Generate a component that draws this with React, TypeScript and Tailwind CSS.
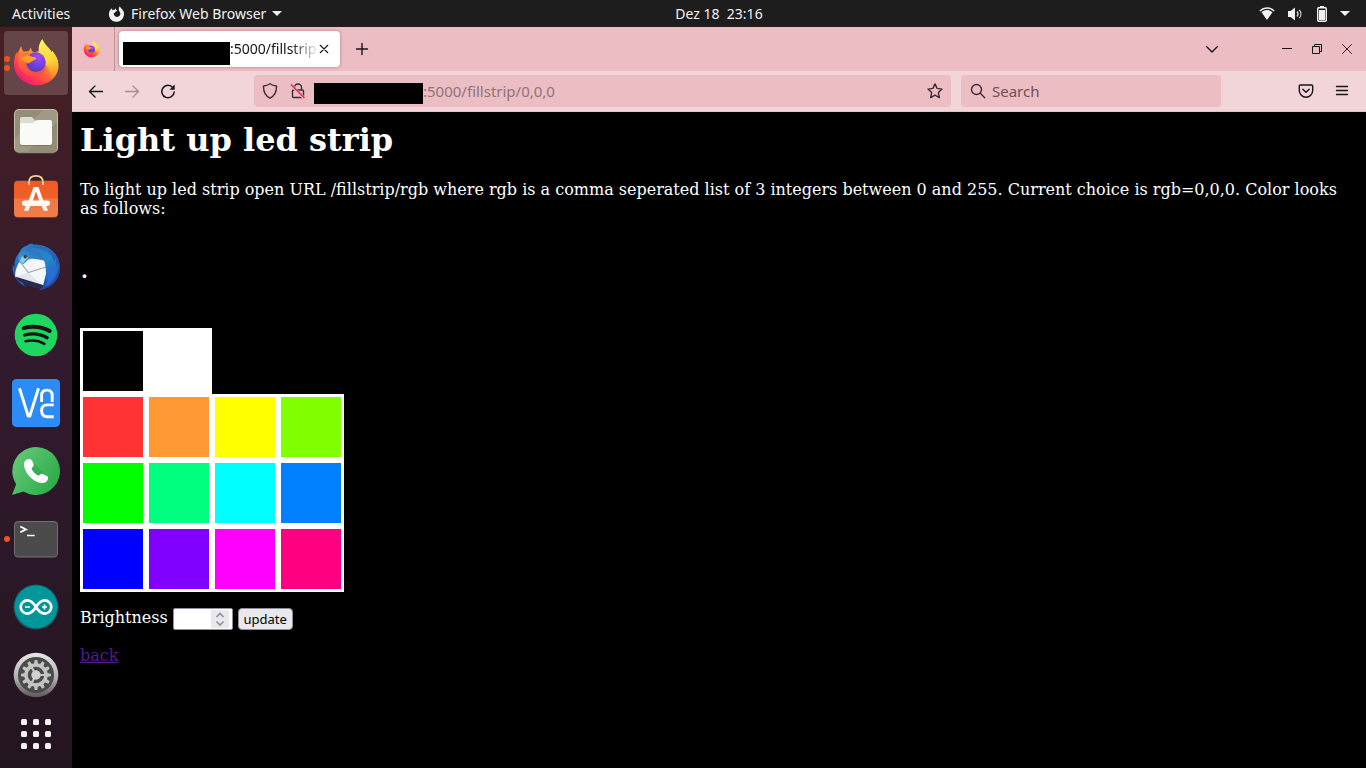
import React from "react";

type IconProps = { className?: string };

function FirefoxLogo({ className }: IconProps) {
  return (
    <svg viewBox="0 0 48 48" className={className} aria-hidden="true">
      <defs>
        <linearGradient id="fx-body" x1="0.85" y1="0.1" x2="0.2" y2="0.95">
          <stop offset="0" stopColor="#fff44f" />
          <stop offset="0.3" stopColor="#ffb031" />
          <stop offset="0.55" stopColor="#ff6b36" />
          <stop offset="0.8" stopColor="#ff3750" />
          <stop offset="1" stopColor="#f0157e" />
        </linearGradient>
        <linearGradient id="fx-tail" x1="0.4" y1="0" x2="0.6" y2="1">
          <stop offset="0" stopColor="#fff155" />
          <stop offset="0.5" stopColor="#ffd83c" />
          <stop offset="1" stopColor="#ff9a2e" stopOpacity="0" />
        </linearGradient>
        <radialGradient id="fx-globe" cx="0.65" cy="0.25" r="0.8">
          <stop offset="0" stopColor="#a749f5" />
          <stop offset="0.5" stopColor="#7542e5" />
          <stop offset="1" stopColor="#4f3bb8" />
        </radialGradient>
        <linearGradient id="fx-head" x1="0" y1="0" x2="0.4" y2="1">
          <stop offset="0" stopColor="#ff9a33" />
          <stop offset="0.5" stopColor="#ff6a3a" />
          <stop offset="1" stopColor="#ff4a48" />
        </linearGradient>
      </defs>
      <path
        d="M9.300 7.200c.2 2.600 1 4 2.500 5.600 1.700-.6 3.600-.7 5.200-.3 .2-1.500.8-2.900 1.900-4 .2 2.700 1.200 4 3.200 5.100l6-2c-1-4.500-.5-8.300 2.300-11.400 1.300 4.200 4.300 6.700 7.200 9.900 1 1.200 1.700 2.300 2.200 3.500l.3-1.800c4.900 5.500 6.900 11 6.200 17.400C44.800 39.300 35.600 46.200 24.500 46.200 12 46.200 2 36.500 2 24.200c0-4.700 1-8.400 3.200-11.600l.6 2.600c.7-3.100 1.700-5.700 3.500-8z"
        fill="url(#fx-body)"
      />
      <path
        d="M30.400.3c1.300 4.200 4.300 6.700 7.200 9.900 1 1.200 1.700 2.300 2.200 3.500l.3-1.800c4.900 5.500 6.900 11 6.200 17.400-.7 5.500-3.500 9.900-7.700 13 .6-7-1.200-13.600-5.600-17.400-.8-4.800-3-6.500-4.800-8.800-2.600-4.700-1.700-11.400 2.200-15.800z"
        fill="url(#fx-tail)"
      />
      <circle cx="23.800" cy="23.200" r="10" fill="url(#fx-globe)" />
      <path
        d="M9.300 7.200c.2 2.600 1 4 2.500 5.600 1.700-.6 3.600-.7 5.200-.3-.4 1.900.3 3.400 1.500 4.700 1.500 1.200 4.200.8 5.500 1.600-.2 1.700-3.800 2.700-4.700 3.600-.6 1.900-3.300 2.100-5 2 .8 5 4.600 8.200 9.500 8.400 5.700.2 9.600-3.200 10.300-7.800.5 7.600-4.700 12.300-11.300 12.300-8.500 0-15-5.500-16.500-12.400-.8-6 .2-12.400 3-17.700z"
        fill="url(#fx-head)"
        opacity="0.8"
      />
      <path
        d="M8.500 19.200c4.200-2 7-3 10.200-1.900 1.700.7 4 .8 5.500 1.600-.3 1.800-3.900 2.700-4.900 3.600-3 2.700-6.800.8-10.800-3.300z"
        fill="#ffa02e"
      />
    </svg>
  );
}

function FilesLogo() {
  return (
    <svg viewBox="0 0 48 48" className="size-12" aria-hidden="true">
      <rect x="2" y="2.500" width="44" height="44" rx="5" fill="#5b5645" />
      <rect x="2" y="2" width="44" height="43.500" rx="5" fill="#c4bfab" />
      <rect x="3" y="3" width="42" height="42" rx="4" fill="#938d78" />
      <path d="M3 31 31 3h10a4 4 0 0 1 4 4v8L15 45H7a4 4 0 0 1-4-4z" fill="#a09a85" />
      <rect x="8" y="14" width="32" height="25" rx="2" fill="#6c6755" opacity="0.6" />
      <path d="M8 12q0-2 2-2h10l3 3.500h3V18H8z" fill="#dedbd0" />
      <path d="M8 18q0-2 2-2h10.500q1.500 0 2.500-1.500t3-1.500h12q2 0 2 2v21q0 2-2 2H10q-2 0-2-2z" fill="#fafaf8" />
    </svg>
  );
}

function SoftwareLogo() {
  return (
    <svg viewBox="0 0 48 48" className="size-12" aria-hidden="true">
      <defs>
        <linearGradient id="sw-bag" x1="0" y1="0" x2="0" y2="1">
          <stop offset="0" stopColor="#f05a24" />
          <stop offset="0.48" stopColor="#ee6129" />
          <stop offset="0.5" stopColor="#f07a45" />
          <stop offset="1" stopColor="#ef7d4b" />
        </linearGradient>
      </defs>
      <rect x="2" y="6.500" width="44" height="36.500" rx="4" fill="#8b3517" />
      <rect x="2" y="5.700" width="44" height="36.300" rx="4" fill="url(#sw-bag)" />
      <path d="M17 10V7.500C17 2.500 20 .9 24 .9s7 1.600 7 6.600V10" fill="none" stroke="#f7d3a3" strokeWidth="1.700" />
      <path d="M21.500 12h5l5 14h-4.200L24 16.500 20.700 26h-4.200z" fill="#fffaf5" />
      <rect x="10" y="25.500" width="28" height="5.400" rx="2.700" fill="#fffaf5" />
      <path d="M13.800 31h4.400l-1.800 4.800H12zM29.800 31h4.400l1.800 4.800h-4.400z" fill="#fffaf5" />
    </svg>
  );
}

function ThunderbirdLogo() {
  return (
    <svg viewBox="0 0 48 48" className="size-12" aria-hidden="true">
      <defs>
        <linearGradient id="tb-body" x1="0.2" y1="0" x2="0.8" y2="1">
          <stop offset="0" stopColor="#2d7fcb" />
          <stop offset="0.5" stopColor="#2262ba" />
          <stop offset="1" stopColor="#1e46a0" />
        </linearGradient>
        <linearGradient id="tb-wing" x1="0.2" y1="0" x2="0.7" y2="1">
          <stop offset="0" stopColor="#2c79c4" />
          <stop offset="0.4" stopColor="#2389c8" />
          <stop offset="1" stopColor="#2353c4" />
        </linearGradient>
        <linearGradient id="tb-head" x1="0" y1="1" x2="1" y2="0">
          <stop offset="0" stopColor="#3fa0e0" />
          <stop offset="1" stopColor="#1f5cab" />
        </linearGradient>
      </defs>
      <path
        d="M15 2.500C17 1 19 .2 21 .5l-.6 1.100C37 1 48 11 48 25c0 9-5 16-13 20l1-2c-2 3-6 4-9 4l3-3c-6 1-12-1-19-4l3 4C5 40-.5 31 .7 21.500L2.500 25C2 17 4.500 12 9 8l-1-.5c2-2.500 4-4 7-5z"
        fill="url(#tb-body)"
      />
      <path d="M8 17.500 17 15l17 2.500V31l-3 11.700L3 34c0-6 2-12 5-16.500z" fill="#f5f6f8" />
      <path d="M3 34 16.300 29.500 31 42.700z" fill="#e4e6eb" />
      <path d="m7.500 18 8.800 11.500L34 24" fill="none" stroke="#a0a9b8" strokeWidth="1.100" />
      <path d="M3 33.500 31 42l-.5 2.500C20 44.500 9 41 3 33.500z" fill="#262a52" />
      <path d="M8 9c6-6 18-9 24-3 4 4 4 9 2.500 13.500-4-3.500-12-5-18-3l-5.500 5-3.500-2C6 16 6 12 8 9z" fill="url(#tb-head)" />
      <path d="M8 18c.5-3 2-5 5-5.500l3 2c-1 2-3.500 3-5.500 6.500z" fill="#8fcdf0" />
      <circle cx="13.200" cy="13.800" r="1.700" fill="#3d3a30" />
      <path d="M22 5c10 0 18 5 20 14l2-4 .5 8 2.500-3-1 8c-2 8-6 13-13 16.500 2-9 1-18 0-24-2-8-5-12-14-12.500C18 6 20 5 22 5z" fill="url(#tb-wing)" />
      <path d="m36 20 3 5 1-3 2 6 2-3c0 7-3 13-9 18 2-9 2-16 1-23z" fill="#2f6fdc" opacity="0.7" />
    </svg>
  );
}

function SpotifyLogo() {
  return (
    <svg viewBox="0 0 48 48" className="size-12" aria-hidden="true">
      <circle cx="24" cy="24" r="21.300" fill="#1ed760" />
      <g fill="none" stroke="#191414" strokeLinecap="round">
        <path d="M11.700 17.100c9-2.500 18-1.500 26 3" strokeWidth="4" />
        <path d="M12.800 24c8-2.100 15.500-1.200 22.300 2.700" strokeWidth="3.300" />
        <path d="M13.500 30.300c7-1.500 13.200-.8 18.900 2.500" strokeWidth="2.600" />
      </g>
    </svg>
  );
}

function VncLogo() {
  return (
    <svg viewBox="0 0 48 48" className="size-12" aria-hidden="true">
      <rect width="48" height="48" rx="4.500" fill="#2b8cf7" />
      <g fill="none" stroke="#fff" strokeWidth="2.900">
        <path d="m7.500 9.300 8.700 27.700h1.600L26.500 9.300" strokeLinejoin="round" />
        <path d="M29.600 22.900v-6.400c0-3.600 2-5.400 5.300-5.400s5.300 1.800 5.300 5.400v6.400" />
        <path d="M41.700 25.900h-6.400c-3.800 0-5.700 2-5.700 5.900s2 5.900 5.700 5.900h6.400" />
      </g>
    </svg>
  );
}

function WhatsAppLogo() {
  return (
    <svg viewBox="0 0 48 48" className="size-12" aria-hidden="true">
      <defs>
        <linearGradient id="wa-bubble" x1="0" y1="0.200" x2="1" y2="0.800">
          <stop offset="0" stopColor="#65c878" />
          <stop offset="1" stopColor="#28ab45" />
        </linearGradient>
      </defs>
      <path d="M24 0a24 24 0 1 1-12.500 44.500L0 48l4.200-10.800A24 24 0 0 1 24 0z" fill="url(#wa-bubble)" />
      <path d="m20 14 14 14-5 7-12-9z" fill="#24963d" opacity="0.350" />
      <path
        d="M16.500 12c2-.3 3 .5 4 2.500l1 2.500c.5 1.500-.3 2.800-2 4.500 1.200 3.200 3.800 5.800 7.200 7.300 1.500-1.800 2.700-2.500 4.200-1.800l3.500 1.700c1.800.8 2 2 1.300 4-1 2.500-4 3.800-7 3.200C19.500 34 13 26 12 18.500c-.3-3 1.200-6 4.500-6.500z"
        fill="#fff"
      />
    </svg>
  );
}

function TerminalLogo() {
  return (
    <svg viewBox="0 0 48 48" className="size-12" aria-hidden="true">
      <rect x="2" y="6" width="44" height="36.500" rx="4.500" fill="#747474" />
      <rect x="2.900" y="7" width="42.200" height="34.600" rx="3.700" fill="#4b4b4b" />
      <path d="m8.300 11.500 5.700 2.900-5.700 2.900" fill="none" stroke="#fff" strokeWidth="1.800" />
      <path d="M15 20.500h7.700" stroke="#fff" strokeWidth="1.500" />
    </svg>
  );
}

function ArduinoLogo() {
  return (
    <svg viewBox="0 0 48 48" className="size-12" aria-hidden="true">
      <circle cx="24" cy="24" r="22.500" fill="#126468" />
      <circle cx="24" cy="23.700" r="21.300" fill="#00979c" />
      <path
        d="M24 24c-2.500-4-4.500-6.600-8.700-6.600a6.600 6.600 0 0 0 0 13.200c4.200 0 6.200-2.600 8.700-6.600s4.500-6.600 8.700-6.600a6.600 6.600 0 0 1 0 13.200c-4.200 0-6.200-2.600-8.700-6.600z"
        fill="none"
        stroke="#fff"
        strokeWidth="2.700"
      />
      <path d="M13 24h5M30 24h5M32.500 21.500v5" stroke="#fff" strokeWidth="1.600" />
    </svg>
  );
}

const gearTeeth = [0, 30, 60, 90, 120, 150, 180, 210, 240, 270, 300, 330];

function SettingsLogo() {
  return (
    <svg viewBox="0 0 48 48" className="size-12" aria-hidden="true">
      <defs>
        <linearGradient id="st-ring" x1="0" y1="0" x2="0" y2="1">
          <stop offset="0" stopColor="#e9e9e9" />
          <stop offset="0.600" stopColor="#aaa" />
          <stop offset="1" stopColor="#5e5659" />
        </linearGradient>
      </defs>
      <circle cx="24" cy="24" r="22.300" fill="url(#st-ring)" />
      <circle cx="24" cy="24" r="18" fill="#4a4a4a" />
      <g fill="#c4c4c4">
        {gearTeeth.map((angle) => (
          <path key={angle} d="M21.900 13.500l.8-4.500h2.600l.8 4.500z" transform={`rotate(${angle} 24 24)`} />
        ))}
      </g>
      <circle cx="24" cy="24" r="10" fill="none" stroke="#c4c4c4" strokeWidth="3.500" />
      <path d="m19.500 16 4.500 8h9M24 24l-4.500 8" fill="none" stroke="#c4c4c4" strokeWidth="2.200" />
      <circle cx="24" cy="24" r="4.700" fill="#d0d0d0" />
    </svg>
  );
}

function AppGridIcon() {
  return (
    <svg viewBox="0 0 30 30" className="size-[30px]" fill="#f2f1f0" aria-hidden="true">
      {[0, 12, 24].map((y) =>
        [0, 12, 24].map((x) => <rect key={`${x}-${y}`} x={x} y={y} width="6" height="6" rx="1.500" />)
      )}
    </svg>
  );
}

const dockItems = [
  { name: "Firefox", icon: <FirefoxLogo className="size-12" />, windows: 2, active: true },
  { name: "Files", icon: <FilesLogo />, windows: 0 },
  { name: "Ubuntu Software", icon: <SoftwareLogo />, windows: 0 },
  { name: "Thunderbird", icon: <ThunderbirdLogo />, windows: 0 },
  { name: "Spotify", icon: <SpotifyLogo />, windows: 0 },
  { name: "VNC Viewer", icon: <VncLogo />, windows: 0 },
  { name: "WhatsApp", icon: <WhatsAppLogo />, windows: 0 },
  { name: "Terminal", icon: <TerminalLogo />, windows: 1 },
  { name: "Arduino", icon: <ArduinoLogo />, windows: 0 },
  { name: "Settings", icon: <SettingsLogo />, windows: 0 },
];

function Dock() {
  return (
    <nav
      aria-label="Dock"
      className="flex w-[72px] shrink-0 flex-col items-center gap-1 bg-linear-to-b from-[#471f22] via-[#321a2e] via-45% to-[#231520] pt-1"
    >
      {dockItems.map((item) => (
        <button
          key={item.name}
          type="button"
          aria-label={item.name}
          className={
            item.active
              ? "relative flex size-16 shrink-0 items-center justify-center rounded bg-[#664548]"
              : "relative flex size-16 shrink-0 items-center justify-center rounded"
          }
        >
          {item.icon}
          <span className="absolute inset-y-0 left-0 flex flex-col justify-center gap-[3px]">
            {Array.from({ length: item.windows }, (_, i) => (
              <span key={i} className="size-[6px] rounded-full bg-[#e95420]" />
            ))}
          </span>
        </button>
      ))}
      <button type="button" aria-label="Show Applications" className="mt-2 p-0">
        <AppGridIcon />
      </button>
    </nav>
  );
}

function TopBar() {
  return (
    <header className="grid h-[27px] shrink-0 grid-cols-[72px_1fr_auto_1fr] items-center bg-[#1d1d1d] text-sm text-[#f2f2f2]">
      <button type="button" className="justify-self-start pl-3">
        Activities
      </button>
      <button type="button" className="flex items-center gap-[6px] justify-self-start pl-[37px] whitespace-nowrap">
        <svg viewBox="0 0 16 16" className="size-4" aria-hidden="true">
          <path
            d="M2.800 2.200c0 .9.300 1.400.9 2 .6-.4 1.300-.5 2-.4.100-.6.400-1.200.9-1.600 0 1.200.5 1.800 1.500 2.200-.5 1-1.600 1.100-2 1.800-.3.600-.8.900-1.300.9a3.300 3.300 0 1 0 5.700-1.700C9.500 4.200 9.400 2 10.800.2c.5 1.400 1.600 2.200 2.600 3.300A7.600 7.600 0 1 1 2.800 2.200z"
            fill="#f2f2f2"
          />
        </svg>
        Firefox Web Browser
        <svg viewBox="0 0 10 5" className="h-[5px] w-[10px]" aria-hidden="true">
          <path d="M0 0h10L5 5z" fill="#f2f2f2" />
        </svg>
      </button>
      <button type="button" className="whitespace-pre">
        {"Dez 18  23:16"}
      </button>
      <button type="button" aria-label="System menu" className="mr-4 flex items-center justify-self-end">
        <svg viewBox="0 0 16 16" className="mr-3 size-4" aria-hidden="true">
          <path d="M.8 5C5 1 11 1 15.200 5" fill="none" stroke="#f2f2f2" strokeWidth="1.300" />
          <path d="M2.500 6.300c3.500-3 7.500-3 11 0L8 14z" fill="#f2f2f2" />
        </svg>
        <svg viewBox="0 0 16 16" className="mr-[11px] size-4" aria-hidden="true">
          <path d="M1 5h2.500L8 1.500v13L3.500 11H1z" fill="#f2f2f2" />
          <path d="M10 5.500c1.300 1.500 1.300 3.500 0 5M12.200 3.800c2.300 2.500 2.300 6 0 8.400" fill="none" stroke="#ddd" strokeWidth="1.200" />
        </svg>
        <svg viewBox="0 0 16 16" className="mr-[10px] size-4" aria-hidden="true">
          <path d="M6 0h4v2H6z" fill="#f2f2f2" />
          <rect x="3.700" y="1.700" width="8.600" height="13.600" rx="1" fill="none" stroke="#f2f2f2" strokeWidth="1.400" />
          <path d="M5 4h6v10H5z" fill="#f2f2f2" />
        </svg>
        <svg viewBox="0 0 10 5" className="h-[5px] w-[10px]" aria-hidden="true">
          <path d="M0 0h10L5 5z" fill="#f2f2f2" />
        </svg>
      </button>
    </header>
  );
}

function LineIcon({ d, className = "size-4", color = "#15141a", width = 1.4 }: { d: string; className?: string; color?: string; width?: number }) {
  return (
    <svg
      viewBox="0 0 16 16"
      className={className}
      fill="none"
      stroke={color}
      strokeWidth={width}
      strokeLinecap="round"
      strokeLinejoin="round"
      aria-hidden="true"
    >
      <path d={d} />
    </svg>
  );
}

function TabStrip() {
  return (
    <div className="flex h-11 items-center bg-[#edbdc4]">
      <button type="button" aria-label="Pinned tab" className="flex h-full w-[43px] items-center justify-center border-r border-[#ba9499] pr-1">
        <FirefoxLogo className="size-[17px]" />
      </button>
      <div className="ml-1 flex h-9 w-[221px] items-center rounded bg-white pl-1 shadow-[0_0_3px_rgba(90,40,50,0.5)]">
        <div className="flex h-full w-[196px] items-center whitespace-nowrap text-sm text-[#15141a] [mask-image:linear-gradient(to_right,black_86%,transparent)]">
          <span className="mt-2 h-[23px] w-[107px] shrink-0 bg-black" />
          <span>:5000/fillstrip</span>
        </div>
        <button type="button" aria-label="Close tab" className="flex size-[10px] items-center justify-center">
          <LineIcon d="M2 2l12 12M14 2 2 14" className="size-[10px]" width={1.8} />
        </button>
      </div>
      <button type="button" aria-label="New tab" className="ml-[14px] flex size-4 items-center justify-center">
        <LineIcon d="M8 2.500v11M2.500 8h11" />
      </button>
      <div className="ml-auto flex items-center pr-[11px]">
        <button type="button" aria-label="List all tabs" className="mr-[59px]">
          <LineIcon d="M2.500 5.500 8 11l5.500-5.500" />
        </button>
        <div className="flex gap-[14px]">
          <button type="button" aria-label="Minimize">
            <svg viewBox="0 0 16 16" className="size-4" aria-hidden="true">
              <path d="M3 7h10v1H3z" fill="#15141a" />
            </svg>
          </button>
          <button type="button" aria-label="Restore">
            <svg viewBox="0 0 16 16" className="size-4" fill="none" stroke="#15141a" aria-hidden="true">
              <path d="M3.500 5.500h7v7h-7zM5.500 5V3.500h7v7H11" />
            </svg>
          </button>
          <button type="button" aria-label="Close">
            <LineIcon d="M3.500 3.500l9 9M12.500 3.500l-9 9" width={0.9} />
          </button>
        </div>
      </div>
    </div>
  );
}

function NavBar() {
  const toolButton = "flex h-8 w-9 shrink-0 items-center justify-center";
  return (
    <div className="flex items-center border-b border-[#edbdc4] bg-[#f1d5d9] px-[6px] py-1">
      <button type="button" aria-label="Back" className={toolButton}>
        <LineIcon d="M14.500 8.500h-13M7 3 1.500 8.500 7 14" />
      </button>
      <button type="button" aria-label="Forward" className={toolButton}>
        <LineIcon d="M1.500 8.500h13M9 3l5.500 5.500L9 14" color="#a58f94" />
      </button>
      <button type="button" aria-label="Reload" className={toolButton}>
        <svg viewBox="0 0 16 16" className="size-4" fill="none" stroke="#15141a" strokeWidth="1.500" aria-hidden="true">
          <path d="M12.800 4.600A6.200 6.200 0 1 0 14.200 9" strokeLinecap="round" />
          <path d="M14.700 1.500v5.200H9.500z" fill="#15141a" stroke="none" />
        </svg>
      </button>
      <div className="ml-[68px] flex h-8 flex-1 items-center rounded bg-[#edbdc4] pr-2 pl-2">
        <LineIcon d="M8 .8c1.800 1.400 4 2 6.500 2.200C14.700 8.500 12.500 13 8 15.200 3.500 13 1.300 8.500 1.500 3 4 2.800 6.200 2.200 8 .8z" color="#3a2c31" />
        <svg viewBox="0 0 16 16" className="ml-3 size-4" fill="none" stroke="#3a2c31" strokeWidth="1.400" aria-hidden="true">
          <path d="M4.500 7V4.500a3.500 3.500 0 0 1 7 0V7M3.500 7h9q1 0 1 1v5.500q0 1-1 1h-9q-1 0-1-1V8q0-1 1-1z" />
          <path d="M1 2l13.500 13.500" stroke="#edbdc4" strokeWidth="3" />
          <path d="M1 1.500l13.500 13.500" stroke="#e22850" strokeWidth="1.500" />
        </svg>
        <span className="mt-1 ml-2 h-[21px] w-[109px] shrink-0 bg-black" />
        <input
          aria-label="Address"
          defaultValue=":5000/fillstrip/0,0,0"
          className="h-8 min-w-0 flex-1 bg-transparent text-[15px] text-[#8e747a] outline-none"
        />
        <button type="button" aria-label="Bookmark this page">
          <LineIcon d="M8 .9l2.100 4.500 4.900.7-3.600 3.500.9 5L8 12.200l-4.300 2.400.9-5L1 6.100l4.900-.7z" color="#3a2c31" />
        </button>
      </div>
      <div className="mr-[67px] ml-[10px] flex h-8 w-[260px] items-center gap-[6px] rounded bg-[#edbdc4] pl-[9px]">
        <LineIcon d="M10.300 10.300l4.400 4.400M6.500 1.500a5 5 0 1 1 0 10 5 5 0 0 1 0-10z" color="#3a2c31" />
        <input
          aria-label="Search"
          placeholder="Search"
          className="h-8 min-w-0 flex-1 bg-transparent text-[15px] outline-none placeholder:text-[#6d5056]"
        />
      </div>
      <button type="button" aria-label="Save to Pocket" className={toolButton}>
        <LineIcon d="M2.500 2h11q1.200 0 1.200 1.200V7.500a6.700 6.700 0 0 1-13.400 0V3.200Q1.300 2 2.500 2zM4.800 6.300 8 9.300l3.200-3" />
      </button>
      <button type="button" aria-label="Application menu" className={toolButton}>
        <LineIcon d="M2.500 3.500h11M2.500 7.500h11M2.500 11.500h11" />
      </button>
    </div>
  );
}

const swatchRows = [
  [
    { rgb: "0,0,0", fill: "bg-black" },
    { rgb: "255,255,255", fill: "bg-white" },
  ],
  [
    { rgb: "255,51,51", fill: "bg-[#ff3333]" },
    { rgb: "255,153,51", fill: "bg-[#ff9933]" },
    { rgb: "255,255,0", fill: "bg-[#ffff00]" },
    { rgb: "128,255,0", fill: "bg-[#80ff00]" },
  ],
  [
    { rgb: "0,255,0", fill: "bg-[#00ff00]" },
    { rgb: "0,255,128", fill: "bg-[#00ff80]" },
    { rgb: "0,255,255", fill: "bg-[#00ffff]" },
    { rgb: "0,128,255", fill: "bg-[#0080ff]" },
  ],
  [
    { rgb: "0,0,255", fill: "bg-[#0000ff]" },
    { rgb: "128,0,255", fill: "bg-[#8000ff]" },
    { rgb: "255,0,255", fill: "bg-[#ff00ff]" },
    { rgb: "255,0,128", fill: "bg-[#ff0080]" },
  ],
];

function LedPage() {
  return (
    <main className="flex-1 bg-black px-2 pt-[9px] pb-2 font-['DejaVu_Serif',serif] text-base leading-[19px] text-white">
      <h1 className="mb-[21px] text-[32px] leading-[38px] font-bold">Light up led strip</h1>
      <p>
        To light up led strip open URL /fillstrip/rgb where rgb is a comma seperated list of 3 integers between 0 and
        255. Current choice is rgb=0,0,0. Color looks as follows:
      </p>
      <p className="pt-[34px] pb-[42px] text-[28px] leading-[34px]">.</p>
      <div>
        {swatchRows.map((row, i) => (
          <div key={i} className="flex">
            {row.map((swatch) => (
              <a
                key={swatch.rgb}
                href={`#/fillstrip/${swatch.rgb}`}
                aria-label={`rgb ${swatch.rgb}`}
                className={`size-[66px] border-3 border-white ${swatch.fill}`}
              />
            ))}
          </div>
        ))}
      </div>
      <form className="mt-4 flex items-start gap-[5px]" onSubmit={(event) => event.preventDefault()}>
        <label htmlFor="brightness">Brightness</label>
        <div className="relative">
          <input
            id="brightness"
            type="number"
            min={0}
            max={100}
            className="block h-[22px] w-[60px] [appearance:textfield] rounded-xs border border-[#8f8f9d] bg-white pr-5 pl-1 text-[13px] text-black outline-none"
          />
          <svg viewBox="0 0 18 18" className="pointer-events-none absolute top-[2px] right-1 size-[18px]" aria-hidden="true">
            <path d="M0 0h18v18H0z" fill="#e9e9ed" />
            <path d="M5.500 7l3.500-3.500L12.500 7M5.500 11.500 9 15l3.500-3.500" fill="none" stroke="#8f8f9d" strokeWidth="1.600" />
          </svg>
        </div>
        <button
          type="submit"
          className="flex h-[22px] w-[55px] items-center justify-center rounded border border-[#8f8f9d] bg-[#e9e9ed] font-['Noto_Sans',sans-serif] text-[13px] text-black"
        >
          update
        </button>
      </form>
      <a href="#back" className="mt-4 inline-block text-[#551a8b] underline">
        back
      </a>
    </main>
  );
}

export default function App() {
  return (
    <div className="flex min-h-screen flex-col bg-black font-['Noto_Sans',sans-serif]">
      <TopBar />
      <div className="flex flex-1">
        <Dock />
        <section aria-label="Firefox Web Browser" className="flex min-w-0 flex-1 flex-col">
          <TabStrip />
          <NavBar />
          <LedPage />
        </section>
      </div>
    </div>
  );
}
